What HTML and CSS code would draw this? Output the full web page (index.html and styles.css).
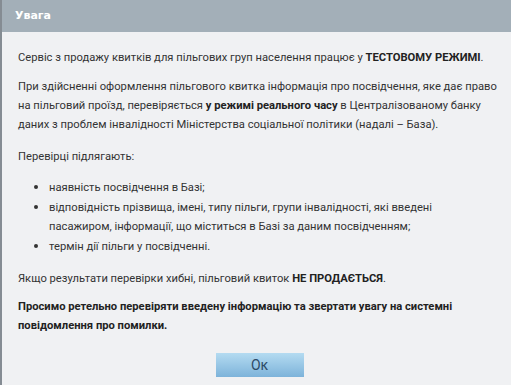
FILE: index.html
```html
<!DOCTYPE html>
<html lang="uk">
<head>
    <meta charset="UTF-8">
    <title>Увага</title>
    <link rel="stylesheet" href="styles.css">
</head>
<body>

<div class="dialog">
    <div class="dialog-header">Увага</div>

    <div class="dialog-body">
        <p class="first">Сервіс з продажу квитків для пільгових груп населення працює у <b>ТЕСТОВОМУ РЕЖИМІ</b>.</p>
        <p>При здійсненні оформлення пільгового квитка інформація про посвідчення, яке дає право на пільговий проїзд, перевіряється <b>у режимі реального часу</b> в Централізованому банку даних з проблем інвалідності Міністерства соціальної політики (надалі – База).</p>
        <p class="check">Перевірці підлягають:</p>
        <ul>
            <li>наявність посвідчення в Базі;</li>
            <li>відповідність прізвища, імені, типу пільги, групи інвалідності, які введені пасажиром, інформації, що міститься в Базі за даним посвідченням;</li>
            <li>термін дії пільги у посвідченні.</li>
        </ul>
        <p class="result">Якщо результати перевірки хибні, пільговий квиток <b>НЕ ПРОДАЄТЬСЯ</b>.</p>
        <p class="note"><b>Просимо ретельно перевіряти введену інформацію та звертати увагу на системні повідомлення про помилки.</b></p>

        <div class="actions">
            <button class="btn-ok">Ок</button>
        </div>
    </div>
</div>

</body>
</html>
```

FILE: styles.css
```css
body {
    margin: 0;
    background-color: #f0f1f3;
    font-family: Roboto, "Liberation Sans", sans-serif;
    font-size: 11.2px;
    color: #333;
}

.dialog {
    border-left: 2px solid #858c93;
    min-height: 385px;
    box-sizing: border-box;
}

.dialog-header {
    height: 32px;
    line-height: 32px;
    background-color: #a3afb8;
    color: #fff;
    font-family: "DejaVu Sans", Verdana, sans-serif;
    font-weight: bold;
    font-size: 11px;
    padding-left: 13px;
}

.dialog-body {
    padding: 16px 10px 0 16px;
}

.dialog-body p {
    margin: 10px 0 0 0;
    line-height: 19px;
}

.dialog-body p.first {
    margin-top: 0;
}

.dialog-body p.check {
    margin-top: 13px;
}

.dialog-body p.result {
    margin-top: 13px;
}

.dialog-body p.note {
    margin-top: 9px;
}

.dialog-body b {
    color: #222;
}

ul {
    margin: 11px 50px 0 0;
    padding-left: 31px;
}

ul li {
    line-height: 19px;
}

ul li::marker {
    font-size: 14px;
}

.actions {
    display: flex;
    justify-content: center;
    margin-top: 18px;
}

.btn-ok {
    width: 88px;
    height: 24px;
    border: none;
    background: linear-gradient(#b4dbf1, #7db3da);
    color: #2d4a66;
    font-family: Roboto, "Liberation Sans", sans-serif;
    font-size: 14px;
    padding: 0;
    cursor: pointer;
}
```
